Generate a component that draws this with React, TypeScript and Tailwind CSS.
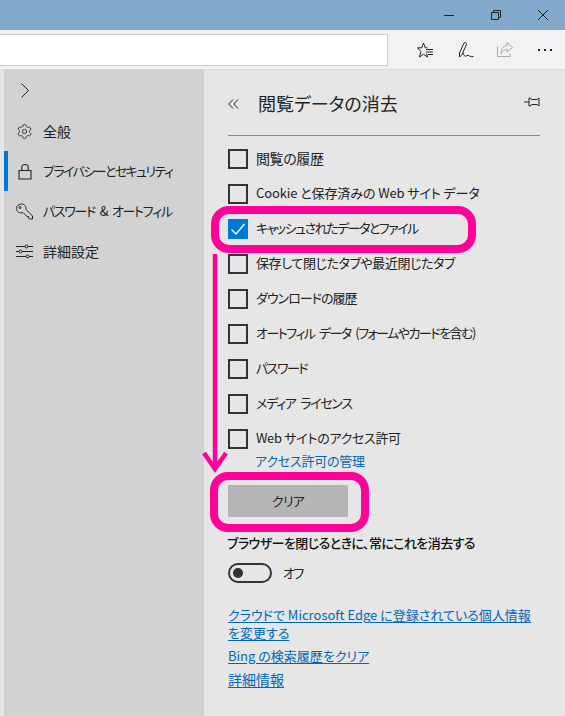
import { Settings } from 'lucide-react';

const FONT = "font-['Noto_Sans_CJK_JP','Noto_Sans',sans-serif] [font-feature-settings:'palt']";

const options = [
  { label: '閲覧の履歴', checked: false, size: 'text-[14px] tracking-[-0.4px]' },
  { label: 'Cookie と保存済みの Web サイト データ', checked: false, size: 'text-[13px] tracking-[-0.1px]' },
  { label: 'キャッシュされたデータとファイル', checked: true, size: 'text-[13px] tracking-[-1.5px]' },
  { label: '保存して閉じたタブや最近閉じたタブ', checked: false, size: 'text-[13px] tracking-[-0.4px]' },
  { label: 'ダウンロードの履歴', checked: false, size: 'text-[13px] tracking-[-1px]' },
  { label: 'オートフィル データ (フォームやカードを含む)', checked: false, size: 'text-[13px] tracking-[-1.5px] [word-spacing:3px]' },
  { label: 'パスワード', checked: false, size: 'text-[13px] tracking-[-1.5px]' },
  { label: 'メディア ライセンス', checked: false, size: 'text-[13px] tracking-[-1.3px] [word-spacing:3px]' },
  { label: 'Web サイトのアクセス許可', checked: false, size: 'text-[13px] tracking-[-0.3px]' },
];

function Checkbox({ checked }: { checked: boolean }) {
  if (checked) {
    return (
      <span className="w-5 h-5 shrink-0 bg-[#0078d7] flex items-center justify-center">
        <svg width="16" height="16" viewBox="0 0 16 16" fill="none" stroke="#fff" strokeWidth="1.4">
          <path d="M1.5 8.5 L6 13 L14.5 3" />
        </svg>
      </span>
    );
  }
  return <span className="w-5 h-5 shrink-0 border-2 border-[#333333]" />;
}

function NavItem({ icon, label, size, active }: { icon: React.ReactNode; label: string; size: string; active?: boolean }) {
  return (
    <div className="h-10 flex items-center relative pl-3">
      {active && <span className="absolute left-0 top-0 w-1 h-10 bg-[#0078d7]" />}
      <span className="w-[17px] flex justify-center shrink-0">{icon}</span>
      <span className={`ml-[10px] text-[#222222] whitespace-nowrap ${size}`}>{label}</span>
    </div>
  );
}

export default function App() {
  return (
    <div className={`relative w-[565px] h-[716px] overflow-hidden bg-[#e6e6e6] flex flex-col ${FONT}`}>
      {/* title bar */}
      <div className="h-[30px] bg-[#83aacd] flex items-center justify-end shrink-0">
        <svg width="12" height="12" viewBox="0 0 12 12" className="mr-[35px]" fill="none" stroke="#222" strokeWidth="1">
          <path d="M1 6.5 H11" />
        </svg>
        <svg width="12" height="12" viewBox="0 0 12 12" className="mr-[35px]" fill="none" stroke="#222" strokeWidth="1">
          <path d="M1.5 3.5 H8.5 V10.5 H1.5 Z M3.5 3.5 V1.5 H10.5 V8.5 H8.5" />
        </svg>
        <svg width="12" height="12" viewBox="0 0 12 12" className="mr-[16px]" fill="none" stroke="#222" strokeWidth="1">
          <path d="M1 1 L11 11 M11 1 L1 11" />
        </svg>
      </div>

      {/* toolbar */}
      <div className="h-10 bg-[#f2f2f2] flex items-center shrink-0 border-b border-[#d9d9d9]">
        <div className="w-[389px] h-8 bg-white border border-[#cccccc] -ml-px shrink-0" />
        <div className="flex items-center ml-[29px]">
          <svg width="16" height="16" viewBox="0 0 16 16" fill="none" stroke="#222" strokeWidth="1">
            <path d="M10.5 5.8 H8.2 L6.5 1 L4.8 5.8 H0.5 L4 9.6 L2.5 15 L6.5 12.2 L10.5 15 L9.6 11.5" />
            <path d="M9 7.5 H16 M9 10 H16 M11 12.5 H16" />
          </svg>
          <svg width="16" height="16" viewBox="0 0 16 16" className="ml-[25px]" fill="none" stroke="#222" strokeWidth="1">
            <path d="M1.5 15 L1.5 11 L6 1 C7 0 9 1 8.5 2.5 L4 12.5 Z" />
            <path d="M5 11 C6 14 7.5 15 9 13.5 C10.5 12.5 12 15.5 15.5 14.5" />
          </svg>
          <svg width="16" height="16" viewBox="0 0 16 16" className="ml-[23px]" fill="none" stroke="#a9a9a9" strokeWidth="1">
            <path d="M0.5 4.5 V14.5 H13 V11" />
            <path d="M10 0.5 L15.5 5.5 L10 10 V7.5 C7 7.5 5 9 4 12 C4 7.5 6 4 10 3.5 Z" />
          </svg>
          <span className="ml-[25px] flex gap-[4px]">
            <span className="w-[2px] h-[2px] bg-[#222222]" />
            <span className="w-[2px] h-[2px] bg-[#222222]" />
            <span className="w-[2px] h-[2px] bg-[#222222]" />
          </span>
        </div>
      </div>

      <div className="flex flex-1 pl-1">
        {/* left rail */}
        <div className="w-[200px] bg-[#d2d2d2] shrink-0">
          <div className="h-[41px] flex items-center pl-[17px]">
            <svg width="8" height="15" viewBox="0 0 8 15" fill="none" stroke="#222" strokeWidth="1">
              <path d="M0.5 0.5 L7.5 7.5 L0.5 14.5" />
            </svg>
          </div>
          <NavItem icon={<Settings size={17} strokeWidth={1.2} color="#222" />} label="全般" size="text-[14px]" />
          <NavItem
            active
            size="text-[13px] tracking-[-1.6px]"
            icon={
              <svg width="14" height="17" viewBox="0 0 14 17" fill="none" stroke="#222" strokeWidth="1.1">
                <path d="M1 7.5 H13 V16 H1 Z M3.8 7.5 V4.5 C3.8 0.5 10.2 0.5 10.2 4.5 V7.5" />
              </svg>
            }
            label="プライバシーとセキュリティ"
          />
          <NavItem
            size="text-[13px] tracking-[-1.3px] [word-spacing:3px]"
            icon={
              <svg width="17" height="17" viewBox="0 0 17 17" fill="none" stroke="#222" strokeWidth="1">
                <path d="M5.5 1 C8.5 1 10.5 3.5 10 6.5 L16.5 13 V16 H13.5 L12.5 15 V13.5 H11 L7 9.5 C3.5 11 0.5 8.5 0.5 5.5 C0.5 3 2.5 1 5.5 1 Z" />
                <circle cx="4" cy="4.5" r="1" />
              </svg>
            }
            label="パスワード & オートフィル"
          />
          <NavItem
            size="text-[14px]"
            icon={
              <svg width="17" height="15" viewBox="0 0 17 15" fill="none" stroke="#222" strokeWidth="1">
                <path d="M0 2.5 H9 M12 2.5 H17 M0 7.5 H3 M6 7.5 H17 M0 12.5 H10 M13 12.5 H17" />
                <circle cx="10.5" cy="2.5" r="1.5" />
                <circle cx="4.5" cy="7.5" r="1.5" />
                <circle cx="11.5" cy="12.5" r="1.5" />
              </svg>
            }
            label="詳細設定"
          />
        </div>

        {/* clear browsing data panel */}
        <div className="flex-1 pl-6 pr-[25px]">
          <div className="h-[66px] pt-[2px] flex items-center border-b border-[#8c8c8c]">
            <svg width="11" height="10" viewBox="0 0 11 10" fill="none" stroke="#222" strokeWidth="1">
              <path d="M5 0.5 L0.8 5 L5 9.5 M10 0.5 L5.8 5 L10 9.5" />
            </svg>
            <h1 className="ml-[19px] text-[18px] text-[#222222] font-normal">閲覧データの消去</h1>
            <svg width="16" height="10" viewBox="0 0 16 10" fill="none" stroke="#222" strokeWidth="1" className="ml-auto mb-[4px]">
              <path d="M0 5 H5 M5 1 H6 L8 2.5 H13 L15 1 V9 L13 7.5 H8 L6 9 H5 Z" />
            </svg>
          </div>
          <div className="flex flex-col gap-[15px] mt-[13px]">
            {options.map((o) => (
              <label key={o.label} className={`flex items-center h-5 gap-2 text-[#222222] whitespace-nowrap ${o.size}`}>
                <Checkbox checked={o.checked} />
                <span className="-mt-[2px]">{o.label}</span>
              </label>
            ))}
          </div>
          <a className="block ml-[27px] text-[13px] text-[#0067b8] leading-5 mt-[2px] tracking-[-0.2px]">アクセス許可の管理</a>
          <button className="block w-[120px] h-8 mt-[14px] bg-[#b5b5b5] text-[13px] text-[#222222] tracking-[-0.8px]">クリア</button>
          <p className="mt-[16px] text-[13px] leading-5 text-[#111111] font-medium -ml-px whitespace-nowrap tracking-[-0.55px]">ブラウザーを閉じるときに、常にこれを消去する</p>
          <div className="flex items-center mt-[10px] h-5">
            <span className="w-[44px] h-5 rounded-full border-2 border-[#333333] flex items-center pl-[3px]">
              <span className="w-[10px] h-[10px] rounded-full bg-[#333333]" />
            </span>
            <span className="ml-[11px] text-[13px] text-[#222222] tracking-[-1.5px]">オフ</span>
          </div>
          <div className="mt-[23px] text-[13px] leading-[18px] text-[#0067b8] w-[312px] flex flex-col">
            <a className="underline underline-offset-2 mb-[5px]">クラウドで Microsoft Edge に登録されている個人情報を変更する</a>
            <a className="underline underline-offset-2 self-start mb-[5px]">Bing の検索履歴をクリア</a>
            <a className="underline underline-offset-2 self-start text-[14px]">詳細情報</a>
          </div>
        </div>
      </div>

      {/* pink annotations */}
      <div className="absolute left-[211px] top-[206px] w-[265px] h-[47px] rounded-[18px] border-[8px] border-[#ff0099]" />
      <div className="absolute left-[210px] top-[472px] w-[159px] h-[60px] rounded-[18px] border-[8px] border-[#ff0099]" />
      <svg className="absolute left-[200px] top-[252px]" width="30" height="222" viewBox="0 0 30 222" fill="none" stroke="#ff0099" strokeWidth="4.5">
        <path d="M15 2 V217 M4 201 L15 217 L26 201" />
      </svg>
    </div>
  );
}
